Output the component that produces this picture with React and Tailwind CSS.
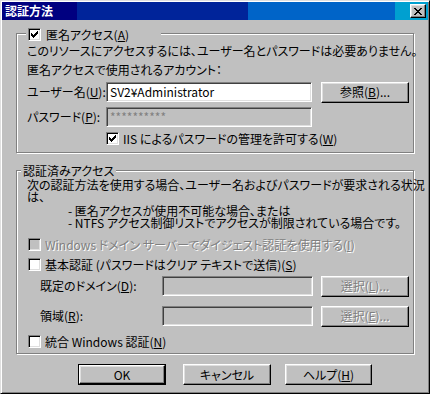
import React from "react";

const U = ({ children }) => (
  <span className="underline underline-offset-[1px] decoration-[1px]">{children}</span>
);

const Check = () => (
  <svg width="7" height="7" viewBox="0 0 7 7" shapeRendering="crispEdges">
    <path
      d="M0 2h1v3H0zM1 3h1v3H1zM2 4h1v3H2zM3 3h1v3H3zM4 2h1v3H4zM5 1h1v3H5zM6 0h1v3H6z"
      fill="#000"
    />
  </svg>
);

function CheckBox({ checked, disabled }) {
  return (
    <div
      className={`w-[13px] h-[13px] shrink-0 border border-t-[#808080] border-l-[#808080] border-r-white border-b-white shadow-[inset_1px_1px_0_#000,inset_-1px_-1px_0_#dfdfdf] flex items-center justify-center ${
        disabled ? "bg-[#c0c0c0]" : "bg-white"
      }`}
    >
      {checked && <Check />}
    </div>
  );
}

function Btn({ children, className = "", disabled }) {
  return (
    <div
      className={`h-[21px] border border-t-white border-l-white border-r-black border-b-black shadow-[inset_-1px_-1px_0_#808080,inset_1px_1px_0_#dfdfdf] flex items-center justify-center whitespace-nowrap ${
        disabled ? "text-[#808080] [text-shadow:1px_1px_0_#fff]" : "text-black"
      } ${className}`}
    >
      {children}
    </div>
  );
}

function Edit({ children, className = "", disabled }) {
  return (
    <div
      className={`h-[20px] border border-t-[#808080] border-l-[#808080] border-r-white border-b-white shadow-[inset_1px_1px_0_#404040,inset_-1px_-1px_0_#dfdfdf] flex items-center pl-[3px] whitespace-nowrap ${
        disabled ? "bg-[#c0c0c0] text-[#808080]" : "bg-white text-black"
      } ${className}`}
    >
      {children}
    </div>
  );
}

const CloseGlyph = () => (
  <svg width="8" height="7" viewBox="0 0 8 7" shapeRendering="crispEdges">
    <path
      d="M0 0h2v1H0zM6 0h2v1H6zM1 1h2v1H1zM5 1h2v1H5zM2 2h4v1H2zM3 3h2v1H3zM2 4h4v1H2zM1 5h2v1H1zM5 5h2v1H5zM0 6h2v1H0zM6 6h2v1H6z"
      fill="#000"
    />
  </svg>
);

export default function App() {
  return (
    <div className="w-[430px] h-[394px] bg-[#c0c0c0] border border-t-[#dfdfdf] border-l-[#dfdfdf] border-r-black border-b-black shadow-[inset_1px_1px_0_#fff,inset_-1px_-1px_0_#808080] p-[1px] text-[12px] leading-[14px] text-black font-['Noto_Sans_CJK_JP',sans-serif] [font-feature-settings:'palt'] overflow-hidden select-none">
      {/* Title bar */}
      <div className="h-[18px] flex items-center justify-between pl-[3px] pr-[2px] bg-[linear-gradient(to_right,#000080_75px,#00249a_75px,#00249a_246px,#0064c8_246px,#0064c8_393px,#00a0d0_393px)]">
        <span className="text-white font-bold tracking-[0px]">認証方法</span>
        <div className="w-[16px] h-[14px] bg-[#c0c0c0] border border-t-white border-l-white border-r-black border-b-black shadow-[inset_-1px_-1px_0_#808080,inset_1px_1px_0_#dfdfdf] flex items-center justify-center">
          <CloseGlyph />
        </div>
      </div>

      {/* Group 1 */}
      <div className="relative ml-[14px] mt-[13px] w-[398px] h-[120px] border border-[#808080] shadow-[inset_1px_1px_0_#fff,1px_1px_0_#fff] pl-[10px] pt-[10px]">
        <div className="absolute left-[9px] top-[-6px] h-[13px] w-[135px] px-[2px] bg-[#c0c0c0] flex items-center">
          <CheckBox checked />
          <span className="ml-[5px] whitespace-nowrap">
            匿名アクセス(<U>A</U>)
          </span>
        </div>
        <div className="h-[14px] flex items-center whitespace-nowrap">
          このリソースにアクセスするには、ユーザー名とパスワードは必要ありません。
        </div>
        <div className="mt-[5px] h-[14px] flex items-center whitespace-nowrap">
          匿名アクセスで使用されるアカウント：
        </div>
        <div className="mt-[5px] h-[20px] flex items-center">
          <div className="w-[79px] whitespace-nowrap">
            ユーザー名(<U>U</U>):
          </div>
          <Edit className="w-[206px]">SV2¥Administrator</Edit>
          <Btn className="ml-[9px] w-[88px] h-[20px]">
            参照(<U>B</U>)...
          </Btn>
        </div>
        <div className="mt-[5px] h-[20px] flex items-center">
          <div className="w-[79px] whitespace-nowrap text-[#000]">
            パスワード(<U>P</U>):
          </div>
          <Edit className="w-[206px]" disabled>
            <span className="tracking-[0px]">**********</span>
          </Edit>
        </div>
        <div className="mt-[5px] h-[13px] flex items-center ml-[79px]">
          <CheckBox checked />
          <span className="ml-[4px] whitespace-nowrap">
            IIS によるパスワードの管理を許可する(<U>W</U>)
          </span>
        </div>
      </div>

      {/* Group 2 */}
      <div className="relative ml-[14px] mt-[17px] w-[398px] h-[184px] border border-[#808080] shadow-[inset_1px_1px_0_#fff,1px_1px_0_#fff] pl-[10px] pt-[8px]">
        <div className="absolute left-[4px] top-[-7px] h-[14px] px-[2px] bg-[#c0c0c0] flex items-center whitespace-nowrap">
          認証済みアクセス
        </div>
        <div className="leading-[12px] whitespace-nowrap">
          <div>次の認証方法を使用する場合、ユーザー名およびパスワードが要求される状況</div>
          <div>は、</div>
        </div>
        <div className="mt-[2px] ml-[41px] leading-[12px] whitespace-nowrap">
          <div>- 匿名アクセスが使用不可能な場合、または</div>
          <div>- NTFS アクセス制御リストでアクセスが制限されている場合です。</div>
        </div>
        <div className="mt-[9px] h-[13px] flex items-center ml-[1px]">
          <CheckBox disabled />
          <span className="ml-[4px] whitespace-nowrap text-[#808080] [text-shadow:1px_1px_0_#fff]">
            Windows ドメイン サーバーでダイジェスト認証を使用する(<U>I</U>)
          </span>
        </div>
        <div className="mt-[7px] h-[13px] flex items-center ml-[1px]">
          <CheckBox />
          <span className="ml-[4px] whitespace-nowrap">
            基本認証 (パスワードはクリア テキストで送信)(<U>S</U>)
          </span>
        </div>
        <div className="mt-[5px] h-[20px] flex items-center">
          <div className="ml-[13px] w-[122px] whitespace-nowrap">
            既定のドメイン(<U>D</U>):
          </div>
          <Edit className="w-[151px]" disabled />
          <Btn className="ml-[8px] w-[88px] h-[21px]" disabled>
            選択(<U>L</U>)...
          </Btn>
        </div>
        <div className="mt-[10px] h-[20px] flex items-center">
          <div className="ml-[13px] w-[122px] whitespace-nowrap">
            領域(<U>R</U>):
          </div>
          <Edit className="w-[151px]" disabled />
          <Btn className="ml-[8px] w-[88px] h-[21px]" disabled>
            選択(<U>E</U>)...
          </Btn>
        </div>
        <div className="mt-[9px] h-[13px] flex items-center ml-[1px]">
          <CheckBox />
          <span className="ml-[4px] whitespace-nowrap">
            統合 Windows 認証(<U>N</U>)
          </span>
        </div>
      </div>

      {/* Bottom buttons */}
      <div className="mt-[10px] flex items-start">
        <div className="ml-[76px] w-[88px] h-[21px] border border-black">
          <Btn className="w-full h-full">OK</Btn>
        </div>
        <Btn className="ml-[17px] w-[88px]">キャンセル</Btn>
        <Btn className="ml-[14px] w-[87px]">
          ヘルプ(<U>H</U>)
        </Btn>
      </div>
    </div>
  );
}
